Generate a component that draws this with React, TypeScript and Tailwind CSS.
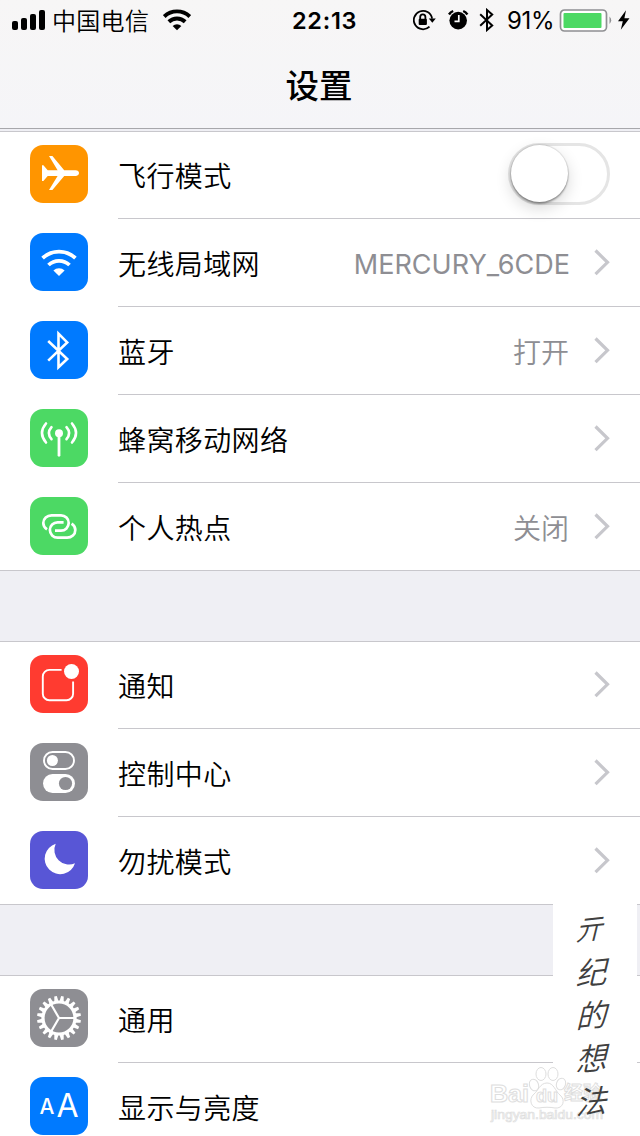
import type { ReactNode } from "react";

const cjk = "font-['Noto_Sans_CJK_SC',sans-serif]";

function WifiMark({ className, stroke = 3.8 }: { className?: string; stroke?: number }) {
  return (
    <svg className={className} viewBox="11 16 36 27.5" fill="none" stroke="currentColor" strokeWidth={stroke}>
      <path d="M12.6 25.2a24 24 0 0 1 32.8 0" />
      <path d="M18.5 32a15.2 15.2 0 0 1 21 0" />
      <path d="M29 43l-5.6-5.5a8 8 0 0 1 11.2 0z" fill="currentColor" stroke="none" />
    </svg>
  );
}

function StatusBar() {
  return (
    <div className="flex h-10 items-center text-black">
      <svg className="ml-3 h-5 w-[33px]" viewBox="0 0 33 20">
        <rect x="0" y="11" width="6" height="9" rx="2" />
        <rect x="9" y="8" width="6" height="12" rx="2" />
        <rect x="18" y="4" width="6" height="16" rx="2" />
        <rect x="27" y="0" width="6" height="20" rx="2" />
      </svg>
      <span className={`ml-[7px] w-[98px] whitespace-nowrap text-2xl font-[350] leading-10 tracking-[0.3px] ${cjk}`}>中国电信</span>
      <WifiMark className="ml-[13px] h-[22px] w-7" stroke={5} />
      <span className="ml-[101px] mt-0.5 w-[68px] whitespace-nowrap font-[Inter,sans-serif] text-[23.5px] font-semibold leading-10 tracking-[0.7px]">
        22:13
      </span>
      <svg className="ml-[53px] h-6 w-6" viewBox="0 0 24 24" fill="none" stroke="black" strokeWidth="1.8">
        <path d="M19.1 10.6A9.2 9.2 0 1 0 16.5 18.6" />
        <path d="M15.8 10.5h7l-3.5 4.2z" fill="black" stroke="none" />
        <path d="M7.2 11V9a2.6 2.6 0 0 1 5.2 0v2" />
        <rect x="5.7" y="10.7" width="8.2" height="6.3" rx="1" fill="black" stroke="none" />
      </svg>
      <svg className="ml-2.5 h-6 w-6" viewBox="0 0 24 24">
        <circle cx="11.2" cy="12.6" r="8.8" />
        <path d="M11.8 7v6.4H7.5" fill="none" stroke="white" strokeWidth="1.7" />
        <path d="M2 6.5A9 9 0 0 1 6.2 3M20.4 6.5A9 9 0 0 0 16.2 3" fill="none" stroke="black" strokeWidth="2.4" />
      </svg>
      <svg className="ml-2 h-6 w-4" viewBox="0 0 16 24" fill="none" stroke="black" strokeWidth="2">
        <path d="M1.2 6.3l12 11.2L8 22V2l5.2 4.5L1.2 17.7" />
      </svg>
      <span className="ml-3 mt-0.5 w-[48px] whitespace-nowrap font-[Inter,sans-serif] text-[24px] leading-10 tracking-[-0.3px]">
        91%
      </span>
      <svg className="ml-1 mt-px h-6 w-[54px]" viewBox="0 0 54 24">
        <rect x="1.5" y="1" width="46" height="21" rx="4" fill="white" stroke="#8f8f92" strokeWidth="1.7" />
        <rect x="4.5" y="4" width="38" height="15" rx="1" fill="#4cd964" />
        <path d="M50.5 7.5a5 5 0 0 1 0 7.5z" fill="#8f8f92" />
      </svg>
      <svg className="ml-[5px] h-5 w-3" viewBox="0 0 12 20">
        <path d="M8 .2L0 11.3h4.8L2.8 19.8 11.5 8.3H6.4z" />
      </svg>
    </div>
  );
}

const hotspotLoop =
  "M17 32.4c-2.3-1.5-3.7-3.8-3.7-6.4 0-4.5 3.7-7.7 8.2-7.7H31a7.7 7.7 0 0 1 0 15.4h-6";

// glyphs are drawn on the 58px tile grid
const glyphs: Record<string, ReactNode> = {
  plane: (
    <path
      d="M12 20.2h1.4l4.3 5.1h9.9L19 11h3.4L34.2 25.2h11.3c2.2 0 3.5 1.2 3.5 2.8s-1.3 2.9-3.5 2.9H34.2L22.4 45H19l8.6-14.1h-9.9L13.4 36H12z"
      fill="white"
    />
  ),
  bluetooth: (
    <path d="M18.2 20L37.2 38l-8.7 8.2v-33.5l8.7 8.7-19 18.2" fill="none" stroke="white" strokeWidth="2.6" />
  ),
  cellular: (
    <g fill="none" stroke="white" strokeWidth="2.6" strokeLinecap="round">
      <circle cx="29" cy="24.2" r="4" fill="white" stroke="none" />
      <path d="M29 24v22.3" strokeWidth="2.8" />
      <path d="M16 14.5q-8 9.5 0 19M42 14.5q8 9.5 0 19" />
      <path d="M21.5 18.2q-5.2 6 0 12M36.5 18.2q5.2 6 0 12" />
    </g>
  ),
  hotspot: (
    <g fill="none" stroke="white" strokeWidth="2.7">
      <path d={hotspotLoop} />
      <path d={hotspotLoop} transform="rotate(180 29.3 29.5)" />
    </g>
  ),
  notice: (
    <>
      <path
        d="M31.6 14.9H19.3a6.5 6.5 0 0 0-6.5 6.5v17.3a6.5 6.5 0 0 0 6.5 6.5h17.3a6.5 6.5 0 0 0 6.5-6.5V26.6"
        fill="none"
        stroke="white"
        strokeWidth="1.9"
      />
      <circle cx="41.5" cy="16.5" r="7.5" fill="white" />
    </>
  ),
  control: (
    <>
      <rect x="14" y="9" width="30" height="17" rx="8.5" fill="none" stroke="white" strokeWidth="1.9" />
      <circle cx="22.4" cy="17.5" r="5.5" fill="white" />
      <rect x="13" y="31" width="32" height="19" rx="9.5" fill="white" />
      <circle cx="35.5" cy="40.5" r="6.6" fill="#8e8e93" />
    </>
  ),
  moon: <path d="M25.7 12.8A15.5 15.5 0 1 0 45 32.2 14.6 14.6 0 0 1 25.7 12.8z" fill="white" />,
  gear: (
    <g fill="none" stroke="white">
      <circle cx="29" cy="29" r="16" strokeWidth="3.2" />
      {Array.from({ length: 20 }, (_, i) => (
        <path
          key={i}
          d="M26.9 12.5L27.7 7h2.6L31.1 12.5z"
          fill="white"
          stroke="none"
          transform={`rotate(${i * 18 + 9} 29 29)`}
        />
      ))}
      <path d="M29 29h15M29 29l-7.7-13.3M29 29l-7.7 13.3" strokeWidth="2.2" />
    </g>
  ),
};

type Item = { label: string; icon: string; color: string; value?: string };

const groups: Item[][] = [
  [
    { label: "飞行模式", icon: "plane", color: "bg-[#ff9500]" },
    { label: "无线局域网", icon: "wifi", color: "bg-[#007aff]", value: "MERCURY_6CDE" },
    { label: "蓝牙", icon: "bluetooth", color: "bg-[#007aff]", value: "打开" },
    { label: "蜂窝移动网络", icon: "cellular", color: "bg-[#4cd964]" },
    { label: "个人热点", icon: "hotspot", color: "bg-[#4cd964]", value: "关闭" },
  ],
  [
    { label: "通知", icon: "notice", color: "bg-[#ff3b30]" },
    { label: "控制中心", icon: "control", color: "bg-[#8e8e93]" },
    { label: "勿扰模式", icon: "moon", color: "bg-[#5856d6]" },
  ],
  [
    { label: "通用", icon: "gear", color: "bg-[#8e8e93]" },
    { label: "显示与亮度", icon: "text", color: "bg-[#007aff]" },
  ],
];

function Tile({ icon, color }: { icon: string; color: string }) {
  return (
    <div className={`mt-3.5 flex h-[58px] w-[58px] shrink-0 justify-center rounded-[13px] text-white ${color}`}>
      {icon === "wifi" && <WifiMark className="mt-4 h-[27.5px] w-9" />}
      {icon === "text" && (
        <span className="flex items-center font-[Inter,sans-serif] leading-none">
          <span className="text-[21px] font-medium">A</span>
          <span className="ml-0.5 text-[32px]">A</span>
        </span>
      )}
      {glyphs[icon] && (
        <svg className="h-[58px] w-[58px]" viewBox="0 0 58 58">
          {glyphs[icon]}
        </svg>
      )}
    </div>
  );
}

function Switch() {
  return (
    <div className="mr-[30px] mt-3 h-[62px] w-[102px] rounded-full border-[3px] border-[#e5e5e5] bg-white">
      <div className="-mt-px h-[57px] w-[57px] rounded-full bg-white shadow-[0_0_1px_1px_rgba(0,0,0,0.1),0_2px_2px_rgba(0,0,0,0.3),0_6px_16px_rgba(0,0,0,0.16)]" />
    </div>
  );
}

function Row({ item, last }: { item: Item; last: boolean }) {
  return (
    <div className={`flex h-[88px] pl-[30px] ${last ? "border-b border-[#c8c7cc]" : ""}`}>
      <Tile icon={item.icon} color={item.color} />
      <div className={`ml-[30px] flex flex-1 ${last ? "" : "border-b border-[#c8c7cc]"}`}>
        <span
          className={`flex-1 whitespace-nowrap text-[28px] font-[350] leading-[89px] tracking-[0.4px] text-black ${cjk}`}
        >
          {item.label}
        </span>
        {item.icon === "wifi" ? (
          <span className="font-[Inter,sans-serif] text-[27px] leading-[91px] text-[#8e8e93]">{item.value}</span>
        ) : (
          <span className={`mr-px text-[28px] font-[350] leading-[88px] text-[#8e8e93] ${cjk}`}>{item.value}</span>
        )}
        {item.icon === "plane" ? (
          <Switch />
        ) : (
          <svg className="ml-6 mr-[30px] mt-[30px] h-[27px] w-4" viewBox="0 0 16 27">
            <path d="M1.5 1.5l12 11.8-12 11.8" fill="none" stroke="#c7c7cc" strokeWidth="3.2" />
          </svg>
        )}
      </div>
    </div>
  );
}

function Watermark() {
  return (
    <svg className="absolute left-[488px] top-[1064px] h-[62px] w-[122px]" viewBox="0 0 122 62">
      <g fill="white" fillOpacity=".85" stroke="#dedede" strokeWidth="1">
        <ellipse cx="46" cy="21" rx="4.5" ry="6" transform="rotate(-20 46 21)" />
        <ellipse cx="53" cy="10" rx="5" ry="6.5" />
        <ellipse cx="65" cy="10" rx="5" ry="6.5" />
        <ellipse cx="73" cy="20" rx="4.5" ry="6" transform="rotate(20 73 20)" />
        <path d="M59 19c-7 0-9 8-13 11-6 5-3 15 5 14 5-1 11-1 16 0 8 1 11-8 5-13-5-4-6-12-13-12z" />
        <g fontFamily="'Liberation Sans','Noto Sans CJK SC',sans-serif">
          <text x="2" y="38" fontSize="23" fontWeight="700" textLength="39" lengthAdjust="spacingAndGlyphs">
            Bai
          </text>
          <text x="48" y="38" fontSize="18" fontWeight="700">
            du
          </text>
          <text x="76" y="36" fontSize="19" fontWeight="700">
            经验
          </text>
          <text x="3" y="55" fontSize="12.5" textLength="112" lengthAdjust="spacingAndGlyphs" strokeWidth=".7">
            jingyan.baidu.com
          </text>
        </g>
      </g>
    </svg>
  );
}

export default function App() {
  return (
    <main className="relative h-[1136px] w-[640px] overflow-hidden bg-[#efeff4]">
      <header className="mb-0.5 h-[129px] border-b border-[#a7a7ab] bg-linear-to-b from-[#f7f6f6] to-[#f5f5f8]">
        <StatusBar />
        <h1 className={`pr-0.5 text-center text-[33.5px] font-medium leading-[87px] text-black ${cjk}`}>设置</h1>
      </header>

      <div className="flex flex-col gap-[70px]">
        {groups.map((items, g) => (
          <section key={g} className="bg-white shadow-[inset_0_1px_#c8c7cc]">
            {items.map((item, i) => (
              <Row key={item.label} item={item} last={i === items.length - 1} />
            ))}
          </section>
        ))}
      </div>

      {/* handwritten signature strip over the list */}
      <div className="absolute left-[553px] top-[904px] h-[232px] w-[84px] bg-white" />
      <Watermark />
      <div
        className={`absolute left-[573px] top-[906px] flex w-9 -skew-y-6 flex-col items-center text-[31px] font-[350] italic leading-[43px] text-[#404040] ${cjk}`}
      >
        <span className="pr-1 text-[28px]">亓</span>
        <span>纪</span>
        <span>的</span>
        <span>想</span>
        <span>法</span>
      </div>
    </main>
  );
}
